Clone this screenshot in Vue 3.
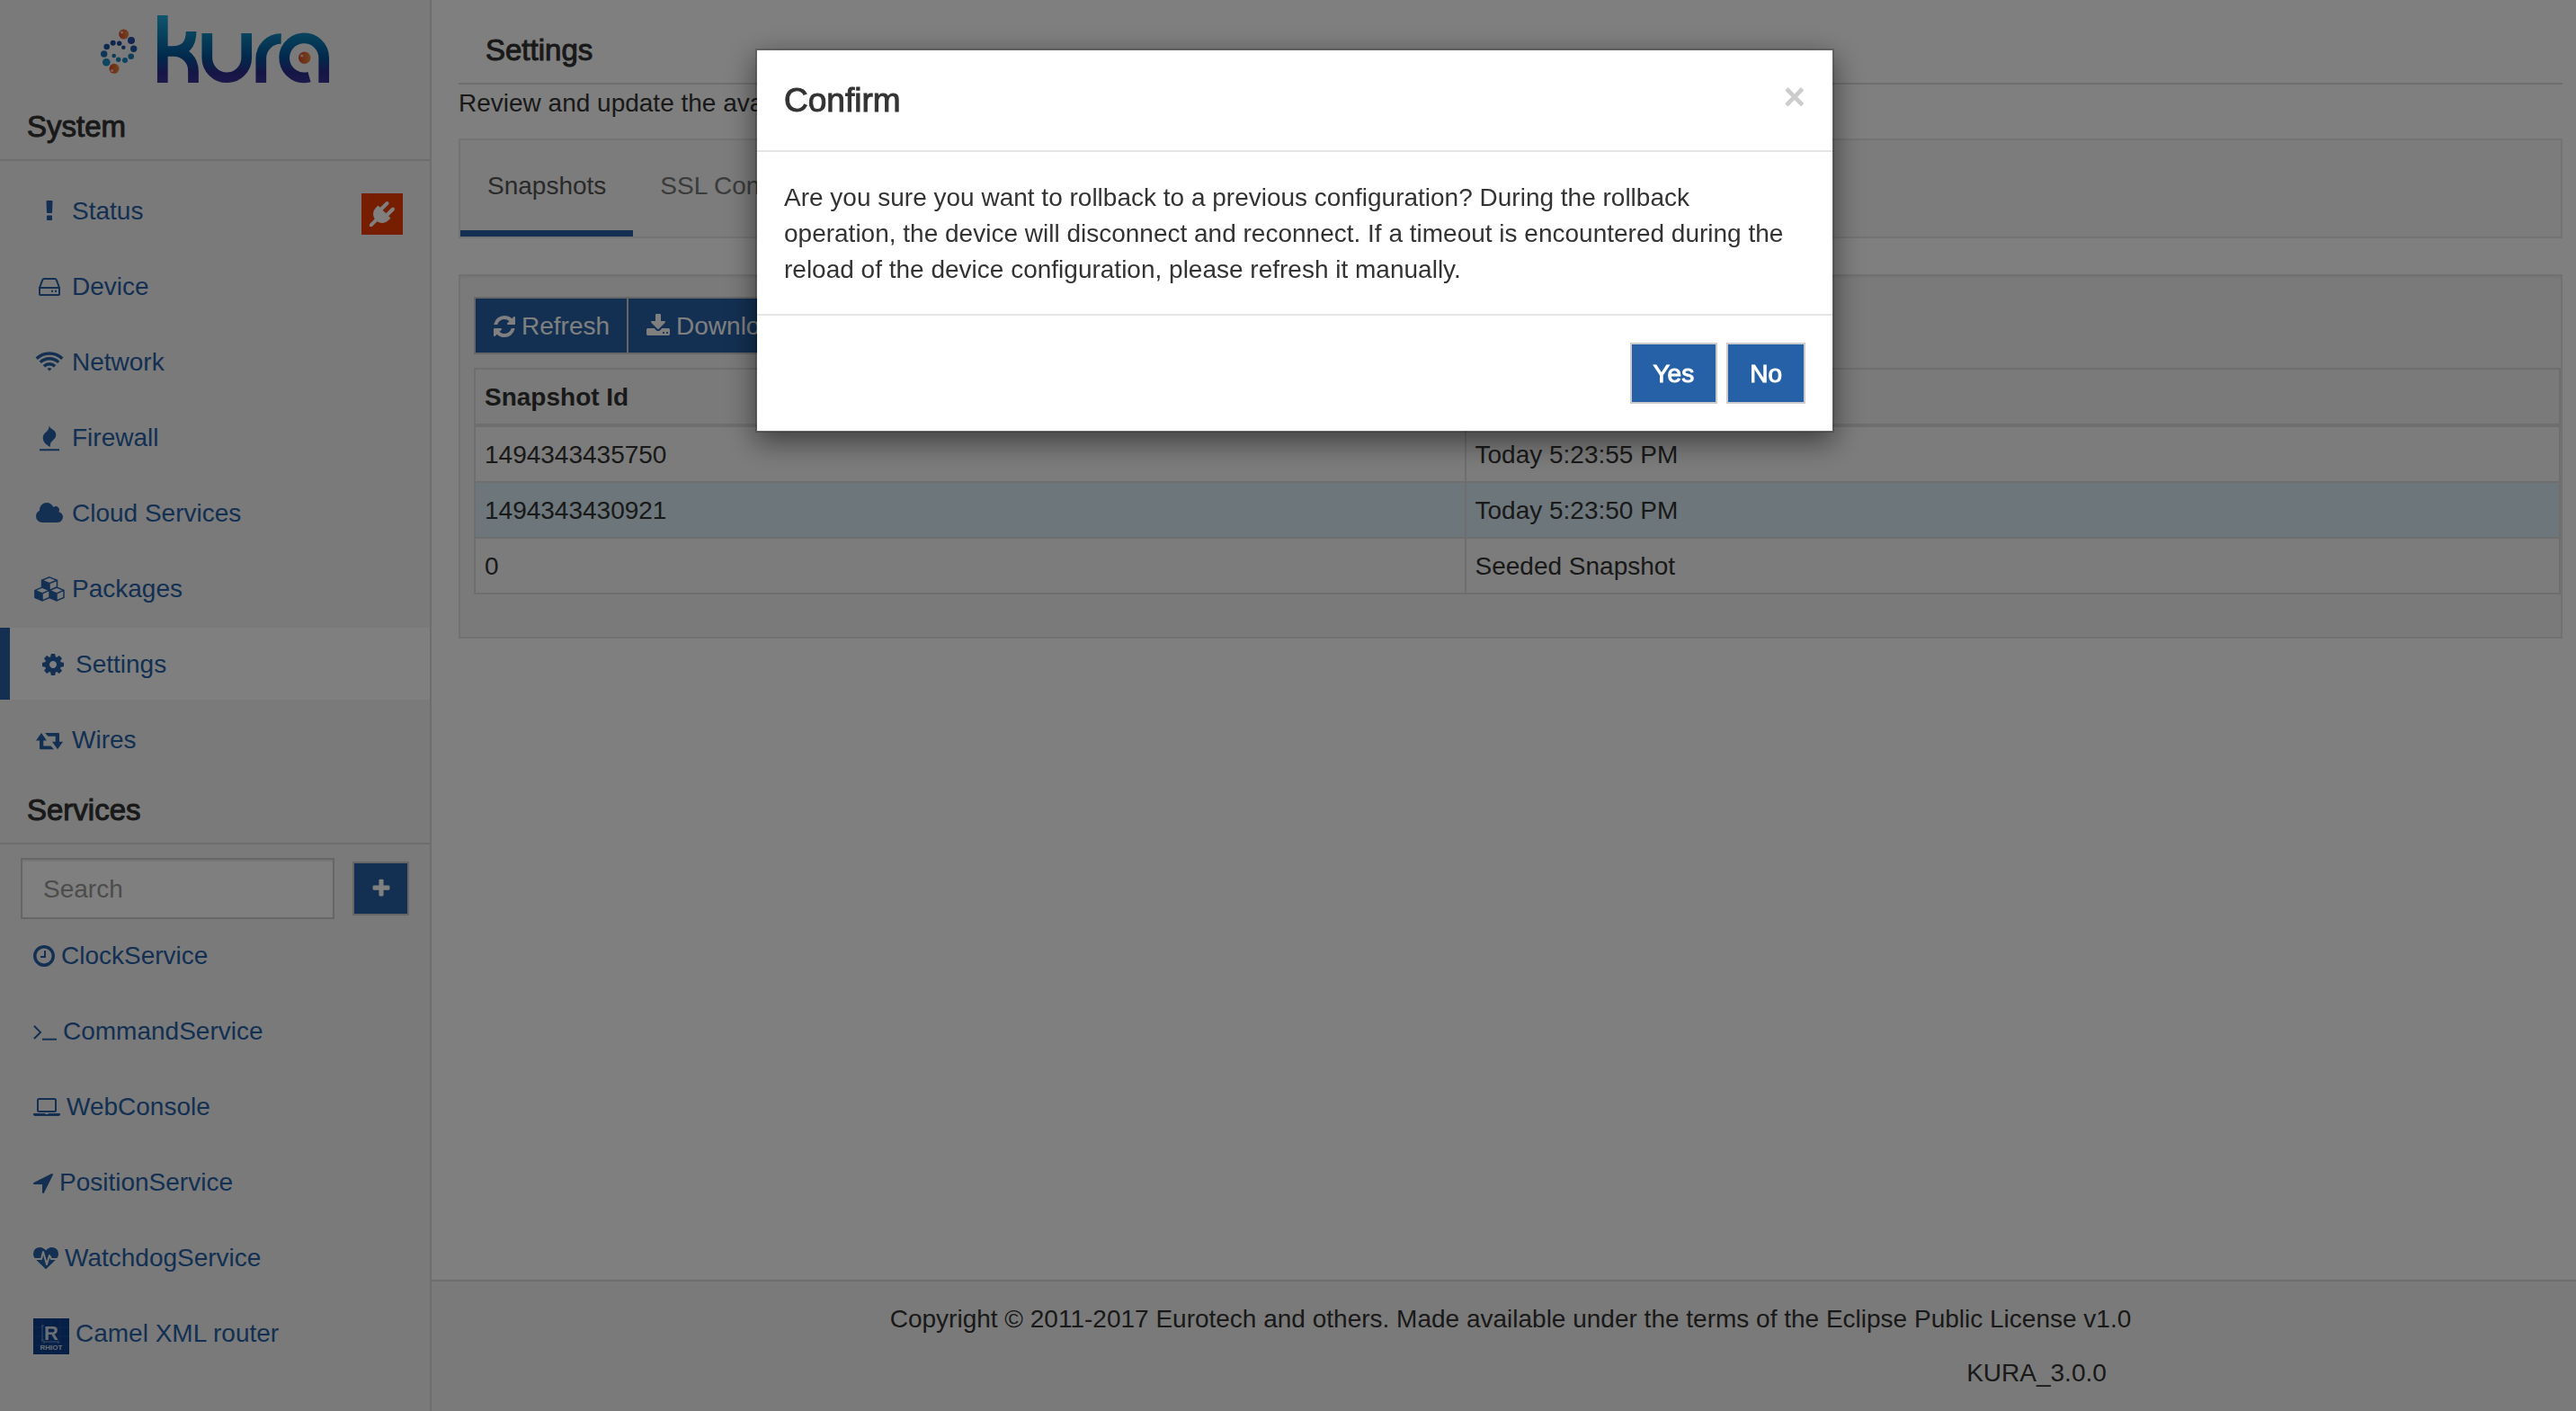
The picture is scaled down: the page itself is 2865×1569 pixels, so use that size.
<script setup>
import { ref } from 'vue'

const search = ref('')

const icons = {
  exclamation: { w: 28, box: '0 0 1792 1792', fill: 'M1088 1248v224q0 26-19 45t-45 19h-256q-26 0-45-19t-19-45v-224q0-26 19-45t45-19h256q26 0 45 19t19 45zm30-1056l-28 768q-1 26-20.500 45t-45.500 19h-256q-26 0-45.500-19t-20.500-45l-28-768q-1-26 17.500-45t44.500-19h320q26 0 44.500 19t17.500 45z' },
  hdd: { w: 24, box: '0 0 24 28', fill: 'M14 17.700h2v2h-2zM18 17.700h2v2h-2z', stroke: 'M1 15L4.300 6.200Q4.700 5 6 5H18Q19.300 5 19.700 6.200L23 15V22Q23 23 22 23H2Q1 23 1 22V15H23' },
  wifi: { w: 30, box: '0 0 30 28', fill: 'M12.500 21Q15 18.800 17.500 21L15 23.600Z', stroke: 'M.7 9.700A20.600 20.600 0 0 1 29.300 9.700M4.800 13.900A14.700 14.700 0 0 1 25.200 13.900M8.900 18.200A8.800 8.800 0 0 1 21.100 18.200', sw: 3.4 },
  fire: { w: 22, box: '0 0 22 28', fill: 'M10.500 0C11.500 4.500 18.300 4.500 18.300 10.500C18.300 16.500 10.500 17 12 24C8 21.800 3.700 19 3.700 14C3.700 7.500 11.500 7 10.500 0ZM0 26.300H22V28.300H0Z' },
  cloud: { w: 32, box: '0 0 2048 1792', fill: 'M1984 1152q0 159-112.500 271.500t-271.500 112.500h-1088q-185 0-316.500-131.500t-131.500-316.500q0-132 71-241.500t187-163.500q-2-28-2-43 0-212 150-362t362-150q158 0 286.500 88t187.500 230q70-62 166-62 106 0 181 75t75 181q0 75-41 138 129 30 213 134.500t84 239.500z' },
  cubes: { w: 34, box: '0 0 34 28', fill: 'M8.500 4.500L17 8V15.500L8.500 12ZM.5 15.500L9 19V27L.5 23.500ZM17 15.500L25 19V27L17 23.500Z', stroke: 'M17 .9L25.500 4.200V12L17 15.400L8.500 12V4.200ZM8.500 4.200L17 7.700L25.500 4.200M17 7.700V15.400M9 12L17 15.400V23.500L9 27L1 23.500V15.400ZM1 15.400L9 19L17 15.400M9 19V27M25 12L33 15.400V23.500L25 27L17 23.500M17 15.400L25 19L33 15.400M25 19V27M17 15.400L25 12', sw: 1.5 },
  cog: { w: 28, box: '0 0 1792 1792', fill: 'M1152 896q0-106-75-181t-181-75-181 75-75 181 75 181 181 75 181-75 75-181zm512-109v222q0 12-8 23t-20 13l-185 28q-19 54-39 91 35 50 107 138 10 12 10 25t-9 23q-27 37-99 108t-94 71q-12 0-26-9l-138-108q-44 23-91 38-16 136-29 186-7 28-36 28h-222q-14 0-24.500-8.500t-11.500-21.500l-28-184q-49-16-90-37l-141 107q-10 9-25 9-14 0-25-11-126-114-165-168-7-10-7-23 0-12 8-23 15-21 51-66.500t54-70.500q-27-50-41-99l-183-27q-13-2-21-12.500t-8-23.500v-222q0-12 8-23t19-13l186-28q14-46 39-92-40-57-107-138-10-12-10-24 0-10 9-23 26-36 98.500-107.500t94.500-71.500q13 0 26 10l138 107q44-23 91-38 16-136 29-186 7-28 36-28h222q14 0 24.500 8.500t11.500 21.500l28 184q49 16 90 37l142-107q9-9 24-9 13 0 25 10 129 119 165 170 7 8 7 22 0 12-8 23-15 21-51 66.500t-54 70.500q26 50 41 98l183 28q13 2 21 12.500t8 23.500z' },
  retweet: { w: 30, box: '0 0 30 28', fill: 'M6 6L12 14.500H8.300V20.500H16.500L20 24.300H5Q4 24.300 4 23.300V14.500H0ZM24 24.300L18 15.800H21.700V9.800H13.500L10 6H25Q26 6 26 7V15.800H30Z' },
  clock: { w: 24, box: '128 0 1536 1792', fill: 'M1024 544v448q0 14-9 23t-23 9h-320q-14 0-23-9t-9-23v-64q0-14 9-23t23-9h224v-352q0-14 9-23t23-9h64q14 0 23 9t9 23zm416 352q0-148-73-273t-198-198-273-73-273 73-198 198-73 273 73 273 198 198 273 73 273-73 198-198 73-273zm224 0q0 209-103 385.500t-279.500 279.500-385.500 103-385.500-103-279.500-279.500-103-385.500 103-385.500 279.500-279.500 385.500-103 385.500 103 279.500 279.500 103 385.500z' },
  terminal: { w: 26, box: '0 0 26 28', fill: 'M10 21.700H26V23.700H10Z', stroke: 'M.9 7.800L8 14.900L.9 22', sw: 2 },
  laptop: { w: 30, box: '0 0 30 28', fill: 'M0 21H13.500V22H16.500V21H30V22.300Q30 24 28 24H2Q0 24 0 22.300Z', stroke: 'M6.500 5H23.500Q25 5 25 6.500V17.500Q25 19 23.500 19H6.500Q5 19 5 17.500V6.500Q5 5 6.500 5Z' },
  arrow: { w: 22, box: '192 0 1408 1792', fill: 'M1593 349l-640 1280q-17 35-57 35-5 0-15-2-22-5-35.500-22.500t-13.500-39.500v-576h-576q-22 0-39.500-13.500t-22.500-35.500 4-42 29-30l1280-640q13-7 29-7 27 0 45 19 15 14 18.500 34.500t-6.500 39.500z' },
  heart: { w: 28, box: '0 0 1792 1792', fill: 'M1280 1024h305q-5 6-10 10.500t-9 7.500l-3 4-623 600q-18 18-44 18t-44-18l-624-602q-5-2-21-20h369q22 0 39.500-13.500t22.500-34.500l70-281 190 667q6 20 23 33t39 13q21 0 38-13t23-33l146-485 56 112q18 35 57 35zm512-428q0 145-103 300h-369l-111-221q-8-17-25.500-27t-36.500-8q-45 5-56 46l-129 430-196-686q-6-20-23.500-33t-39.500-13-39 13.500-22 34.500l-116 464h-423q-103-155-103-300 0-220 127-344t351-124q62 0 126.500 21.500t120 58 95.500 68.500 76 68q36-36 76-68t95.500-68.500 120-58 126.500-21.500q224 0 351 124t127 344z' },
}

const systemItems = [
  { label: 'Status', icon: icons.exclamation, disconnected: true },
  { label: 'Device', icon: icons.hdd },
  { label: 'Network', icon: icons.wifi },
  { label: 'Firewall', icon: icons.fire },
  { label: 'Cloud Services', icon: icons.cloud },
  { label: 'Packages', icon: icons.cubes },
  { label: 'Settings', icon: icons.cog, active: true },
  { label: 'Wires', icon: icons.retweet },
]

const serviceItems = [
  { label: 'ClockService', icon: icons.clock },
  { label: 'CommandService', icon: icons.terminal },
  { label: 'WebConsole', icon: icons.laptop },
  { label: 'PositionService', icon: icons.arrow },
  { label: 'WatchdogService', icon: icons.heart },
]

const snapshots = [
  { id: '1494343435750', created: 'Today 5:23:55 PM' },
  { id: '1494343430921', created: 'Today 5:23:50 PM', selected: true },
  { id: '0', created: 'Seeded Snapshot' },
]

const orbs = [
  [146, 45, 4, '#2a4aa4'], [148.7, 54.3, 3.7, '#2059a6'], [145.7, 62.7, 3.3, '#1b7fb4'],
  [139, 67, 3, '#1789c0'], [131.7, 66.3, 2.7, '#1787be'], [126.7, 62, 2.3, '#1a74b0'],
  [137.3, 52.7, 2.3, '#1c559e'], [132.7, 48.3, 2.7, '#21489a'], [125.7, 47.7, 3, '#21489a'],
  [118.7, 52, 3.3, '#1d559e'], [115.7, 60, 3.7, '#1b6cae'], [118.3, 69.3, 4.3, '#1a8cc0'],
]
</script>

<template>
  <div class="page">
    <aside class="sidebar">
      <svg class="logo" viewBox="112 17 254 75" role="img" aria-label="Kura">
        <defs>
          <linearGradient id="ink" gradientUnits="userSpaceOnUse" x1="0" y1="17" x2="0" y2="92">
            <stop offset="0" stop-color="#1eaadc" />
            <stop offset="0.3" stop-color="#0f82b8" />
            <stop offset="0.62" stop-color="#045298" />
            <stop offset="0.85" stop-color="#2c2c8c" />
            <stop offset="1" stop-color="#3a3296" />
          </linearGradient>
          <linearGradient id="orb">
            <stop offset="0" stop-color="#d8482c" />
            <stop offset="1" stop-color="#e88a3c" />
          </linearGradient>
        </defs>
        <circle v-for="(o, i) in orbs" :key="i" :cx="o[0]" :cy="o[1]" :r="o[2]" :fill="o[3]" />
        <circle cx="137.700" cy="38" r="5.500" fill="url(#orb)" />
        <circle cx="135.500" cy="36" r="1.500" fill="#f6c4bc" />
        <circle cx="127" cy="76.300" r="5.500" fill="url(#orb)" />
        <circle cx="124.700" cy="78.500" r="1.500" fill="#f6c4bc" />
        <g fill="none" stroke="url(#ink)" stroke-width="11.700">
          <path d="M180.800 17V92.100M186 57H192Q212.600 57 212.600 35M186 57H193C206 57 215 67 215 79V92" />
          <path d="M230.300 37V64.300A21.950 21.950 0 0 0 274.200 64.300V37" />
          <path d="M290.300 92V65A22 22 0 0 1 312.700 43" />
          <path d="M344 85.600A22 22 0 1 1 360.200 64.300V92" />
        </g>
        <circle cx="338.700" cy="64.300" r="6.700" fill="url(#orb)" />
        <circle cx="335.700" cy="62" r="1.600" fill="#f6c4bc" />
      </svg>

      <h2 class="heading">System</h2>
      <nav class="system" aria-label="System">
        <a v-for="item in systemItems" :key="item.label" href="#" class="item" :class="{ active: item.active }">
          <span class="fixed">
            <svg class="icon" :width="item.icon.w" height="28" :viewBox="item.icon.box" aria-hidden="true">
              <path :d="item.icon.fill" fill="currentColor" />
              <path v-if="item.icon.stroke" :d="item.icon.stroke" fill="none" stroke="currentColor" :stroke-width="item.icon.sw || 2" />
            </svg>
          </span>
          <span>{{ item.label }}</span>
          <span v-if="item.disconnected" class="badge">
            <svg width="28" height="28" viewBox="0 0 1792 1792" role="img" aria-label="Disconnected">
              <path fill="currentColor" d="M1755 453q37 38 37 90.500t-37 90.500l-401 400 150 150-160 160q-163 163-389.500 186.500t-411.500-100.500l-362 362h-181v-181l362-362q-124-185-100.500-411.500t186.500-389.500l160-160 150 150 400-401q38-37 91-37t90 37 37 90.500-37 90.500l-400 401 234 234 401-400q38-37 91-37t90 37z" />
            </svg>
          </span>
        </a>
      </nav>

      <h2 class="heading">Services</h2>
      <div class="search">
        <input v-model="search" class="field" type="text" placeholder="Search" aria-label="Search services" />
        <button class="add" type="button" aria-label="Add service">
          <svg width="24" height="24" viewBox="0 0 1792 1792" aria-hidden="true">
            <path fill="currentColor" d="M1600 736v192q0 40-28 68t-68 28h-416v416q0 40-28 68t-68 28h-192q-40 0-68-28t-28-68v-416h-416q-40 0-68-28t-28-68v-192q0-40 28-68t68-28h416v-416q0-40 28-68t68-28h192q40 0 68 28t28 68v416h416q40 0 68 28t28 68z" />
          </svg>
        </button>
      </div>
      <nav class="services" aria-label="Services">
        <a v-for="item in serviceItems" :key="item.label" href="#" class="item">
          <svg class="icon" :width="item.icon.w" height="28" :viewBox="item.icon.box" aria-hidden="true">
            <path :d="item.icon.fill" fill="currentColor" />
            <path v-if="item.icon.stroke" :d="item.icon.stroke" fill="none" stroke="currentColor" :stroke-width="item.icon.sw || 2" />
          </svg>
          <span>{{ item.label }}</span>
        </a>
        <a href="#" class="item">
          <svg class="icon rhiot" width="40" height="40" viewBox="0 0 40 40" aria-hidden="true">
            <rect width="40" height="40" fill="#0a3f8e" />
            <path d="M10 0V40M20 0V40M30 0V40M0 10H40M0 20H40M0 30H40" stroke="#1a4c98" fill="none" />
            <path d="M10 8V26M9 8H12M9 24H12M12 26H28M12 25V28M28 25V28" stroke="#7f97c2" fill="none" />
            <text x="20" y="24" font-size="22" text-anchor="middle">R</text>
            <text x="20" y="35" font-size="8" text-anchor="middle">RHIOT</text>
          </svg>
          <span>Camel XML router</span>
        </a>
      </nav>
    </aside>

    <div class="content">
      <main class="main">
        <h1 class="heading">Settings</h1>
        <p class="lead">Review and update the available settings.</p>
        <nav class="tabs" aria-label="Settings sections">
          <a href="#" class="tab current">Snapshots</a>
          <a href="#" class="tab">SSL Configuration</a>
        </nav>
        <section class="well">
          <div class="toolbar">
            <button class="tool" type="button">
              <svg width="24" height="28" viewBox="128 0 1536 1792" aria-hidden="true">
                <path fill="currentColor" d="M1639 1056q0 5-1 7-64 268-268 434.500t-478 166.500q-146 0-282.500-55t-243.500-157l-129 129q-19 19-45 19t-45-19-19-45v-448q0-26 19-45t45-19h448q26 0 45 19t19 45-19 45l-137 137q71 66 161 102t187 36q134 0 250-65t186-179q11-17 53-117 8-23 30-23h192q13 0 22.500 9.500t9.500 22.500zm25-800v448q0 26-19 45t-45 19h-448q-26 0-45-19t-19-45 19-45l138-138q-148-137-349-137-134 0-250 65t-186 179q-11 17-53 117-8 23-30 23h-199q-13 0-22.500-9.500t-9.500-22.500v-7q65-268 270-434.500t480-166.500q146 0 284 55.500t245 156.500l130-129q19-19 45-19t45 19 19 45z" />
              </svg>
              Refresh
            </button>
            <button class="tool" type="button">
              <svg width="26" height="28" viewBox="64 0 1664 1792" aria-hidden="true">
                <path fill="currentColor" d="M1344 1344q0-26-19-45t-45-19-45 19-19 45 19 45 45 19 45-19 19-45zm256 0q0-26-19-45t-45-19-45 19-19 45 19 45 45 19 45-19 19-45zm128-224v320q0 40-28 68t-68 28h-1472q-40 0-68-28t-28-68v-320q0-40 28-68t68-28h465l135 136q58 56 136 56t136-56l136-136h464q40 0 68 28t28 68zm-325-569q17 41-14 70l-448 448q-18 19-45 19t-45-19l-448-448q-31-29-14-70 17-39 59-39h256v-448q0-26 19-45t45-19h256q26 0 45 19t19 45v448h256q42 0 59 39z" />
              </svg>
              Download
            </button>
          </div>
          <table class="grid">
            <thead>
              <tr>
                <th scope="col" class="id">Snapshot Id</th>
                <th scope="col">Created On</th>
              </tr>
            </thead>
            <tbody>
              <tr v-for="row in snapshots" :key="row.id" :class="{ selected: row.selected }">
                <td>{{ row.id }}</td>
                <td>{{ row.created }}</td>
              </tr>
            </tbody>
          </table>
        </section>
      </main>
      <footer class="footer">
        <p>Copyright © 2011-2017 Eurotech and others. Made available under the terms of the Eclipse Public License v1.0</p>
        <p class="version">KURA_3.0.0</p>
      </footer>
    </div>

    <div class="overlay">
      <div class="modal" role="dialog" aria-modal="true" aria-labelledby="confirm-title">
        <header class="modal-head">
          <h2 id="confirm-title">Confirm</h2>
          <button class="close" type="button" aria-label="Close">×</button>
        </header>
        <p class="modal-body">Are you sure you want to rollback to a previous configuration? During the rollback operation, the device will disconnect and reconnect. If a timeout is encountered during the reload of the device configuration, please refresh it manually.</p>
        <div class="modal-foot">
          <button class="answer" type="button">Yes</button>
          <button class="answer" type="button">No</button>
        </div>
      </div>
    </div>
  </div>
</template>

<style>
body {
  margin: 0;
  background: #fff;
}
</style>

<style scoped>
.page {
  display: flex;
  min-height: 100vh;
  color: #333;
  font: 28px/40px "Liberation Sans", Arial, sans-serif;
}
.page * {
  box-sizing: border-box;
}
h1,
h2,
p {
  margin: 0;
}
/* Medium weight: the regular face with a thin outline */
h1,
h2,
.answer {
  font-weight: normal;
  -webkit-text-stroke: 1px currentColor;
}
a {
  text-decoration: none;
}
button,
input {
  border: 2px solid #ccc;
  border-radius: 0;
  font: inherit;
}
button {
  background: #2660a6;
  color: #fff;
}
svg {
  flex: none;
  overflow: visible;
}

.sidebar {
  flex: none;
  width: 480px;
  border-right: 2px solid #ddd;
  background: #f5f5f5;
}
.logo {
  display: block;
  width: 254px;
  height: 75px;
  margin: 17px 0 10px 112px;
}
.heading {
  padding: 22px 30px 19px;
  border-bottom: 2px solid #ddd;
  font-size: 33px;
  line-height: 34px;
}
.system {
  display: grid;
  gap: 4px;
  padding-top: 15px;
}
.services {
  display: grid;
  gap: 4px;
}
.item {
  display: flex;
  align-items: center;
  gap: 7px;
  height: 80px;
  padding: 21px 30px 19px 37px;
  color: #2660a6;
}
.item.active {
  padding-left: 30px;
  border-left: 11px solid #2660a6;
  background: #fff;
}
.fixed {
  display: flex;
  justify-content: center;
  width: 36px;
}
.icon {
  fill-rule: evenodd;
}
.badge {
  display: flex;
  align-items: center;
  justify-content: center;
  align-self: flex-start;
  width: 46px;
  height: 46px;
  margin-left: auto;
  background: #f03c00;
  color: #fff;
}
.rhiot {
  margin-top: 6px;
  fill: #d4dcec;
  font-weight: bold;
}
.search {
  display: flex;
  align-items: center;
  gap: 20px;
  padding: 15px 23px 0;
}
.field {
  flex: 1;
  min-width: 0;
  height: 68px;
  padding: 13px 23px 11px;
  background: #fff;
  box-shadow: inset 0 2px 2px rgba(0, 0, 0, 0.075);
  color: #555;
}
.field::placeholder {
  color: #999;
  opacity: 1;
}
.add {
  display: flex;
  align-items: center;
  justify-content: center;
  width: 63px;
  height: 60px;
  padding: 0;
}

.content {
  display: flex;
  flex: 1;
  flex-direction: column;
  min-width: 0;
}
.main {
  flex: 1;
  padding: 17px 15px 40px 30px;
}
.lead {
  padding-top: 1px;
  margin-bottom: 19px;
}
.tabs {
  display: flex;
  margin-bottom: 40px;
  border: 2px solid #e7e7e7;
  background: #f8f8f8;
}
.tab {
  padding: 31px 30px 29px;
  border-bottom: 7px solid transparent;
  color: #777;
}
.tab.current {
  border-color: #2660a6;
  color: #555;
}
.well {
  padding: 23px 0 47px 15px;
  border: 2px solid #e3e3e3;
  background: #f5f5f5;
  box-shadow: inset 0 2px 2px rgba(0, 0, 0, 0.05);
}
.toolbar {
  display: flex;
  margin-bottom: 15px;
}
.tool {
  display: flex;
  align-items: center;
  gap: 7px;
  height: 64px;
  padding: 11px 19px 9px 20px;
}
.tool + .tool {
  margin-left: -2px;
}
.grid {
  width: 100%;
  border-collapse: collapse;
  table-layout: fixed;
}
.grid th,
.grid td {
  padding: 11px 10px 9px;
  border: 2px solid #ddd;
  text-align: left;
}
.grid th {
  border-bottom-width: 4px;
}
.grid .id {
  width: 47.5%;
}
.grid tbody tr {
  background: #f9f9f9;
}
.grid tbody .selected {
  background: #d9edf7;
}
.footer {
  padding: 22px 0 22px 15px;
  border-top: 2px solid #ddd;
  background: #f5f5f5;
  text-align: center;
}
.version {
  margin: 20px 0 0 50%;
  padding-right: 15px;
}

.overlay {
  position: fixed;
  inset: 0;
  display: flex;
  align-items: flex-start;
  justify-content: center;
  padding: 54px 0 0 15px;
  background: rgba(0, 0, 0, 0.5);
}
.modal {
  width: 1200px;
  border: 2px solid rgba(0, 0, 0, 0.2);
  background: #fff;
  background-clip: padding-box;
  box-shadow: 0 10px 30px rgba(0, 0, 0, 0.5);
}
.modal-head {
  display: flex;
  align-items: flex-start;
  justify-content: space-between;
  padding: 30px;
  border-bottom: 2px solid #e5e5e5;
}
.modal-head h2 {
  font-size: 37px;
  line-height: 51px;
}
.close {
  padding: 0;
  border: 0;
  background: none;
  color: #ccc;
  font-size: 42px;
  font-weight: bold;
  line-height: 44px;
}
.modal-body {
  padding: 31px 30px 29px;
}
.modal-foot {
  display: flex;
  justify-content: flex-end;
  gap: 10px;
  padding: 30px;
  border-top: 2px solid #e5e5e5;
}
.answer {
  padding: 13px 24px 11px;
}
</style>
